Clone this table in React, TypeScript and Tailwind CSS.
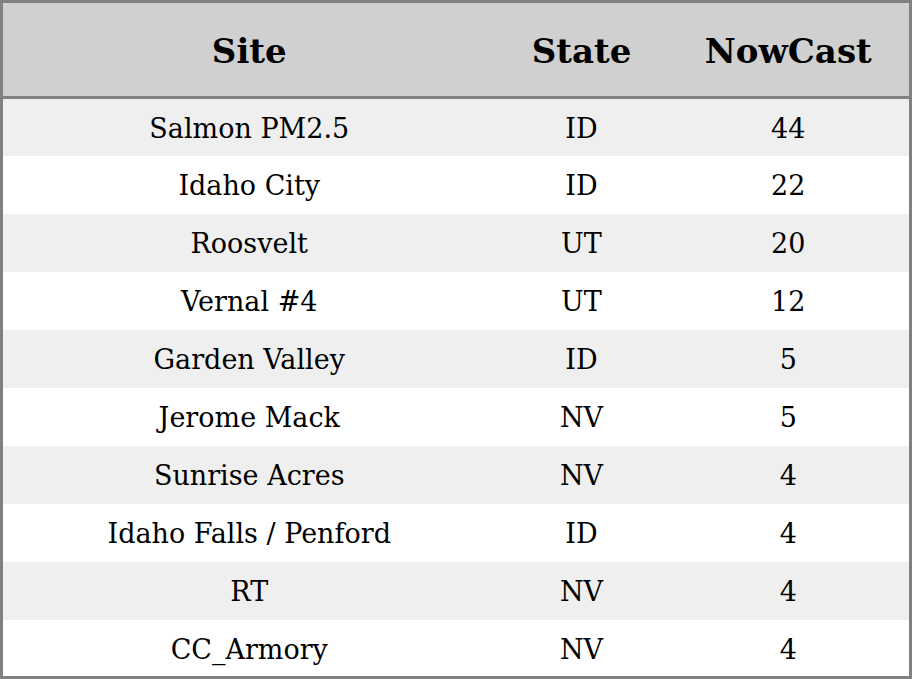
import React from "react";

const rows: [string, string, string][] = [
  ["Salmon PM2.5", "ID", "44"],
  ["Idaho City", "ID", "22"],
  ["Roosvelt", "UT", "20"],
  ["Vernal #4", "UT", "12"],
  ["Garden Valley", "ID", "5"],
  ["Jerome Mack", "NV", "5"],
  ["Sunrise Acres", "NV", "4"],
  ["Idaho Falls / Penford", "ID", "4"],
  ["RT", "NV", "4"],
  ["CC_Armory", "NV", "4"],
];

export default function App() {
  return (
    <div className="w-[912px] h-[679px] bg-white" style={{ fontFamily: '"DejaVu Serif", serif' }}>
      <table className="w-[912px] border-[3px] border-[#808080] border-collapse text-black">
        <thead>
          <tr className="bg-[#d0d0d0] h-[96px] border-b-[3px] border-[#808080]">
            <th className="w-[494px] pt-[4px] text-[34px] font-bold text-center">Site</th>
            <th className="w-[172px] pt-[4px] text-[34px] font-bold text-center">State</th>
            <th className="pt-[4px] text-[34px] font-bold text-center">NowCast</th>
          </tr>
        </thead>
        <tbody>
          {rows.map((r, i) => (
            <tr key={i} className={`h-[58px] ${i % 2 === 0 ? "bg-[#efefef]" : "bg-white"}`}>
              <td className="pt-[4px] text-[27px] text-center">{r[0]}</td>
              <td className="pt-[4px] text-[27px] text-center">{r[1]}</td>
              <td className="pt-[4px] text-[27px] text-center">{r[2]}</td>
            </tr>
          ))}
        </tbody>
      </table>
    </div>
  );
}
